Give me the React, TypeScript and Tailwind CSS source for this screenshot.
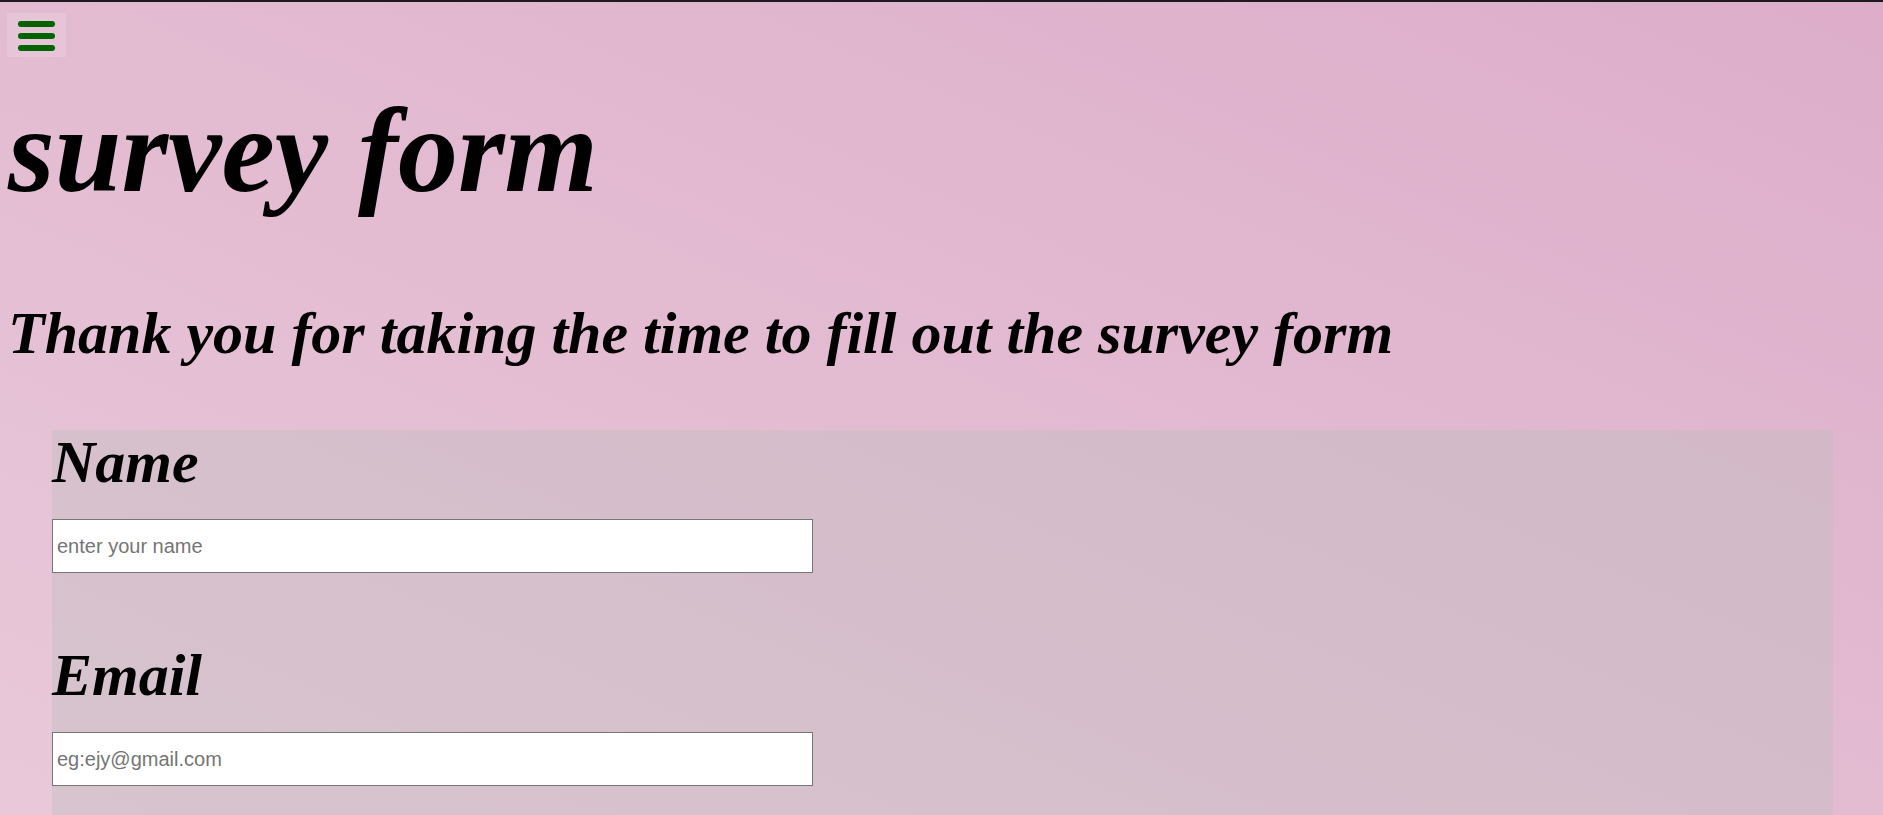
import React from "react";

export default function App() {
  return (
    <div className="min-h-screen bg-fixed bg-[linear-gradient(to_top_right,#e9c9d9,#ddadca)] border-t-2 border-[#1d1a24] font-['Liberation_Serif','Times_New_Roman',serif] text-black">
      <button
        type="button"
        aria-label="menu"
        className="mt-[11px] ml-[7px] w-[59px] h-[44px] bg-white/15 flex flex-col gap-[6px] pt-[8px] pl-[11px]"
      >
        <span className="block w-[37px] h-[6px] rounded-full bg-[#006400]" />
        <span className="block w-[37px] h-[6px] rounded-full bg-[#006400]" />
        <span className="block w-[37px] h-[6px] rounded-full bg-[#006400]" />
      </button>

      <h1 className="mt-[25px] ml-[8px] text-[120px] leading-[normal] font-bold italic">
        survey form
      </h1>

      <h2 className="mt-[79px] ml-[8px] text-[60px] leading-[normal] font-bold italic">
        Thank you for taking the time to fill out the survey form
      </h2>

      <form className="mt-[62px] ml-[52px] mr-[50px] bg-[#bfbfbf66] pb-[300px]">
        <label htmlFor="name" className="block text-[60px] leading-[65px] font-bold italic">
          Name
        </label>
        <input
          id="name"
          type="text"
          placeholder="enter your name"
          className="block mt-[24px] w-[761px] h-[54px] bg-white border border-[#767676] px-[4px] text-[20px] font-['Liberation_Sans',Arial,sans-serif] placeholder:text-[#757575] outline-none"
        />

        <label htmlFor="email" className="block mt-[70px] text-[60px] leading-[65px] font-bold italic">
          Email
        </label>
        <input
          id="email"
          type="email"
          placeholder="eg:ejy@gmail.com"
          className="block mt-[24px] w-[761px] h-[54px] bg-white border border-[#767676] px-[4px] text-[20px] font-['Liberation_Sans',Arial,sans-serif] placeholder:text-[#757575] outline-none"
        />
      </form>
    </div>
  );
}
